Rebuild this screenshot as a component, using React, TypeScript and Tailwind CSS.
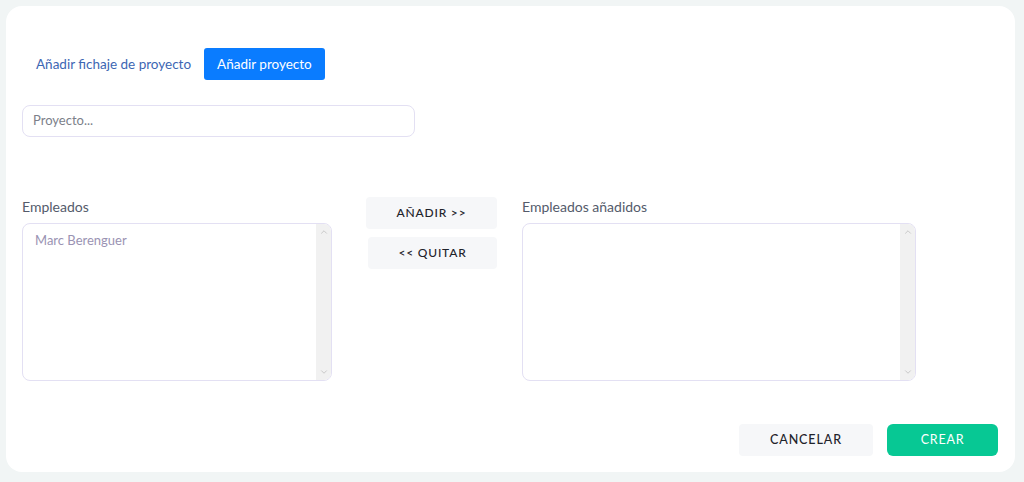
import { ChevronUp, ChevronDown } from "lucide-react";

function ListBox({ items, width }: { items: string[]; width: string }) {
  return (
    <div className={`${width} h-[158px] flex border border-[#e3e0f3] rounded-lg overflow-hidden bg-white`}>
      <div className="flex-1 pl-3 pt-[7px] text-[13px] text-[#9a93b3]">
        {items.map((item) => (
          <div key={item}>{item}</div>
        ))}
      </div>
      <div className="w-[15px] bg-[#f1f1f1] flex flex-col justify-between items-center py-[3px] text-[#b0b0b0]">
        <ChevronUp size={10} strokeWidth={1.5} />
        <ChevronDown size={10} strokeWidth={1.5} />
      </div>
    </div>
  );
}

export default function App() {
  return (
    <div className="w-[1024px] h-[482px] bg-[#f1f5f5] p-[6px] font-['Lato',sans-serif]">
      <div className="w-[1009px] h-[466px] bg-white rounded-2xl pl-4 pr-4 pt-[42px] flex flex-col">
        {/* Tabs */}
        <div className="flex items-center h-[32px]">
          <span className="ml-[14px] text-[13.5px] text-[#3d66b3]">Añadir fichaje de proyecto</span>
          <button className="ml-[13px] h-[32px] px-[13px] rounded-[3px] bg-[#0a7cff] text-white text-[13.5px]">
            Añadir proyecto
          </button>
        </div>

        {/* Project input */}
        <div className="mt-[25px] w-[393px] h-[32px] border border-[#e3e0f3] rounded-lg flex items-center px-[10px] text-[13px] text-[#7c7f8a]">
          Proyecto...
        </div>

        {/* Employees */}
        <div className="mt-[60px] flex">
          <div className="flex flex-col pt-[1px]">
            <span className="text-[14px] text-[#545b6b] leading-[18px]">Empleados</span>
            <div className="mt-[7px]">
              <ListBox items={["Marc Berenguer"]} width="w-[310px]" />
            </div>
          </div>

          <div className="ml-[34px] flex flex-col items-end gap-[8px]">
            <button className="w-[131px] h-[32px] rounded bg-[#f6f7f9] text-[12px] font-medium tracking-[0.8px] text-[#1f232b]">
              AÑADIR &gt;&gt;
            </button>
            <button className="w-[129px] h-[32px] rounded bg-[#f6f7f9] text-[12px] font-medium tracking-[0.8px] text-[#1f232b]">
              &lt;&lt; QUITAR
            </button>
          </div>

          <div className="ml-[25px] flex flex-col pt-[1px]">
            <span className="text-[14px] text-[#545b6b] leading-[18px]">Empleados añadidos</span>
            <div className="mt-[7px]">
              <ListBox items={[]} width="w-[394px]" />
            </div>
          </div>
        </div>

        {/* Footer */}
        <div className="mt-[43px] flex justify-end gap-[14px] pr-[1px]">
          <button className="w-[134px] h-[32px] rounded bg-[#f6f7f9] text-[12.5px] font-medium tracking-[0.9px] text-[#1f232b]">
            CANCELAR
          </button>
          <button className="w-[111px] h-[32px] rounded-md bg-[#07c894] text-[12.5px] tracking-[0.8px] text-white">
            CREAR
          </button>
        </div>
      </div>
    </div>
  );
}
